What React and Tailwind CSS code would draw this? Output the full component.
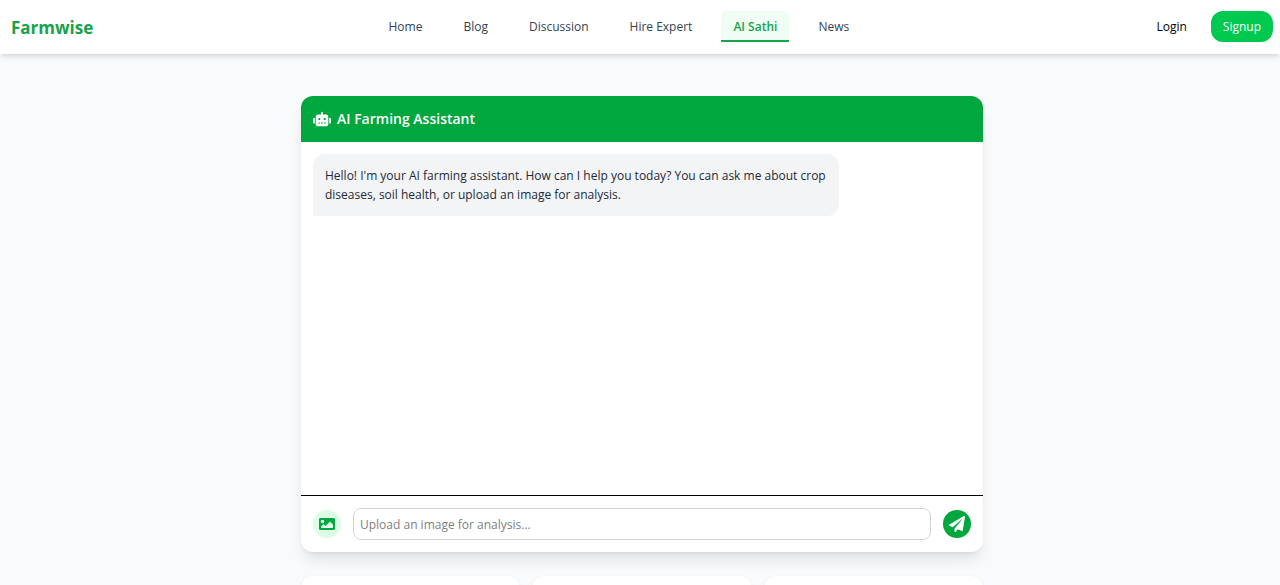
import { FaRobot, FaImage, FaPaperPlane } from "react-icons/fa";

const links = ["Home", "Blog", "Discussion", "Hire Expert", "AI Sathi", "News"];

function Header() {
  return (
    <header className="flex h-[54px] items-center justify-between bg-white pr-[7px] pb-px pl-[11px] shadow-md">
      <a href="#home" className="pt-0.5 text-[17px] leading-7 font-bold text-[#16a34a]">
        Farmwise
      </a>
      <nav className="flex gap-[17px]">
        {links.map((label) => (
          <a
            key={label}
            href="#page"
            className={
              label === "AI Sathi"
                ? "rounded-t-md border-b-2 border-[#16a34a] bg-[#f0fdf4] px-3 pt-[7px] pb-1 font-semibold text-[#16a34a]"
                : "border-b-2 border-transparent px-3 pt-[7px] pb-1 text-[#364153]"
            }
          >
            {label}
          </a>
        ))}
      </nav>
      <div className="flex gap-3">
        <a href="#login" className="px-3 pt-[7px] pb-1.5 text-black">
          Login
        </a>
        <a href="#signup" className="rounded-xl bg-[#00c950] px-3 pt-[7px] pb-1.5 text-white">
          Signup
        </a>
      </div>
    </header>
  );
}

function Chat() {
  return (
    <section className="overflow-hidden rounded-xl bg-white shadow-lg">
      <div className="flex h-[46px] items-center gap-1.5 bg-[#00a63e] px-3 text-white">
        <FaRobot className="size-[18px]" />
        <h1 className="text-[14px] leading-6 font-semibold">AI Farming Assistant</h1>
      </div>
      <div className="h-[353px] overflow-y-auto p-3">
        <p className="w-4/5 rounded-xl rounded-bl-none bg-[#f3f4f6] p-3 leading-[19px] text-[#1e2939]">
          Hello! I'm your AI farming assistant. How can I help you today? You can ask me about crop
          diseases, soil health, or upload an image for analysis.
        </p>
      </div>
      <form className="flex items-center gap-3 border-t border-black p-3">
        <button
          type="button"
          aria-label="Upload image"
          className="flex size-7 shrink-0 items-center justify-center rounded-full bg-[#dcfce7] text-[#00a63e]"
        >
          <FaImage className="size-4" />
        </button>
        <input
          type="text"
          aria-label="Message"
          placeholder="Upload an image for analysis..."
          className="h-8 min-w-0 flex-1 rounded-lg border border-[#d1d5dc] px-1.5 placeholder:text-[#808080]"
        />
        <button
          type="button"
          aria-label="Send"
          className="flex size-7 shrink-0 items-center justify-center rounded-full bg-[#00a63e] text-white"
        >
          <FaPaperPlane className="size-4" />
        </button>
      </form>
    </section>
  );
}

export default function App() {
  return (
    <div className="h-screen overflow-hidden bg-[#f9fafb] font-['Open_Sans','Noto_Sans',sans-serif] text-[12px] leading-[18px]">
      <Header />
      <main className="pt-[42px] pl-1">
        <div className="mx-auto max-w-[682px]">
          <Chat />
          <div className="mt-6 grid grid-cols-3 gap-3">
            <div className="h-24 rounded-xl bg-white shadow-sm" />
            <div className="h-24 rounded-xl bg-white shadow-sm" />
            <div className="h-24 rounded-xl bg-white shadow-sm" />
          </div>
        </div>
      </main>
    </div>
  );
}
